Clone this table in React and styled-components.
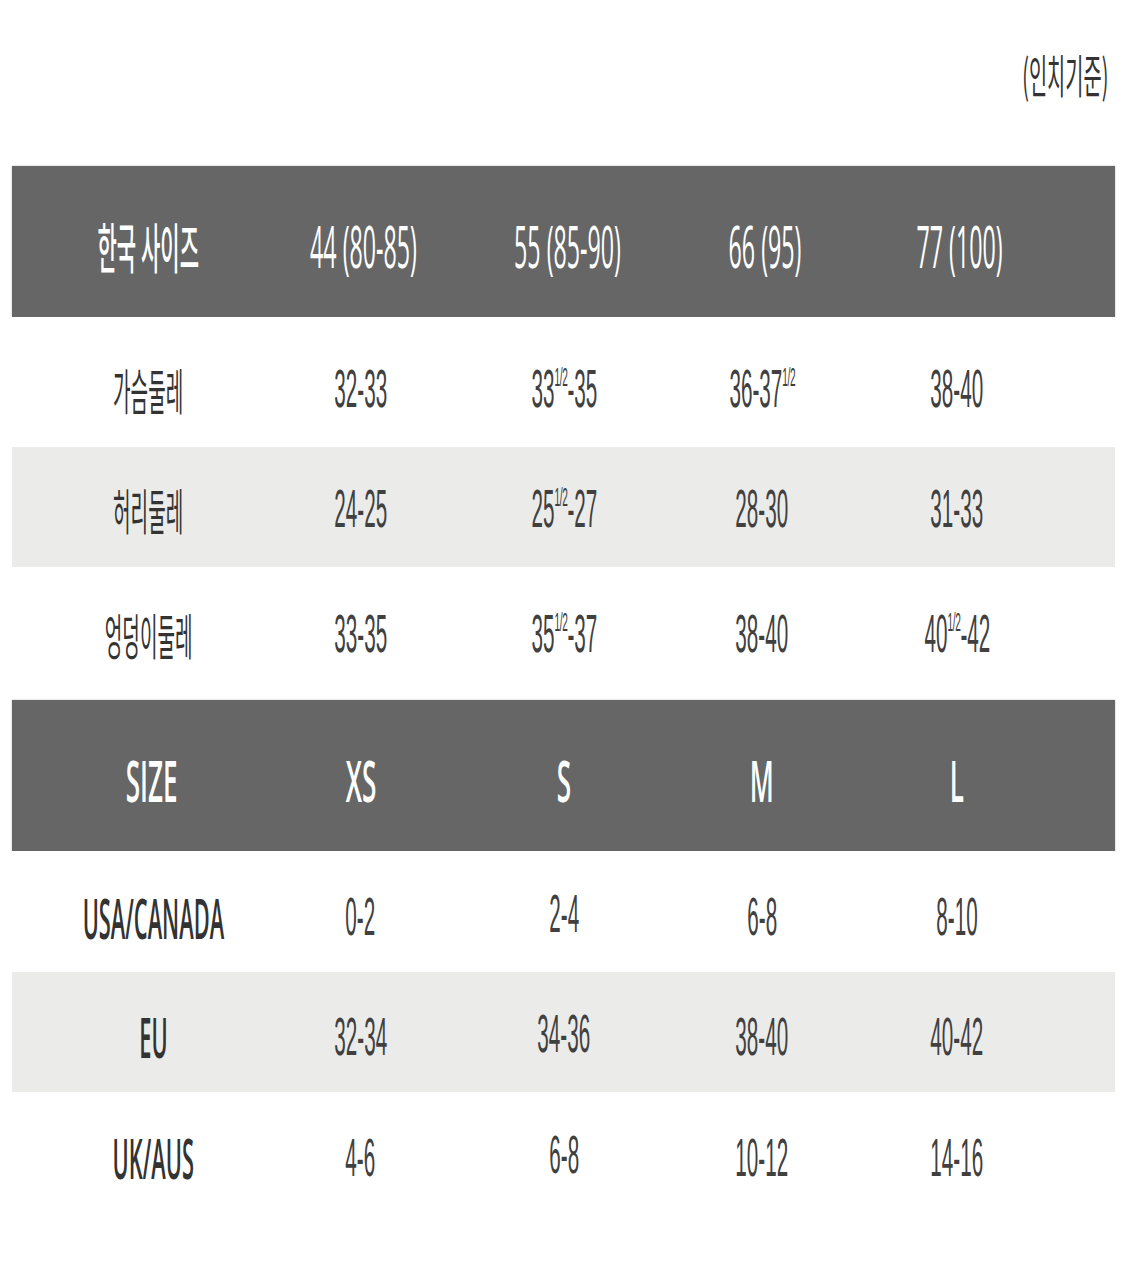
import React from "react";
import styled, { createGlobalStyle } from "styled-components";

const Global = createGlobalStyle`
  html, body { margin: 0; padding: 0; background: #fff; }
  body { width: 1125px; font-family: "Liberation Sans", "Noto Sans CJK KR", sans-serif; }
`;

const Page = styled.div`
  width: 1125px;
  min-height: 1284px;
  background: #fff;
  display: flex;
  flex-direction: column;
`;

const NoteBar = styled.div`
  height: 166px;
  display: flex;
  justify-content: flex-end;
  align-items: flex-start;
  padding: 50px 17px 0 0;
  box-sizing: border-box;
`;

const Squeeze = styled.span`
  display: inline-block;
  white-space: nowrap;
  transform: scaleX(${(p) => p.$scale || 0.39});
  transform-origin: ${(p) => p.$origin || "center"} center;
  line-height: 1;
`;

const Note = styled(Squeeze)`
  font-family: "Noto Sans CJK KR", sans-serif;
  font-size: 46px;
  color: #333;
`;

const Table = styled.div`
  margin-left: 12px;
  width: 1103px;
  display: flex;
  flex-direction: column;
`;

const Row = styled.div`
  display: grid;
  grid-template-columns: 213px 207px 200px 196px 194px;
  padding: 0 61px 0 32px;
  height: ${(p) => p.$h}px;
  background: ${(p) =>
    p.$head ? "#666666" : p.$shade ? "#ebecea" : "#ffffff"};
  box-shadow: ${(p) => (p.$head ? "0 0 2px rgba(0,0,0,0.25)" : "none")};
  position: relative;
`;

const Cell = styled.div`
  min-width: 0;
  display: flex;
  align-items: center;
  justify-content: center;
  padding-top: ${(p) => p.$dy || 0}px;
  box-sizing: border-box;
  margin-left: ${(p) => p.$dx || 0}px;
`;

const HeadText = styled(Squeeze)`
  font-family: "Open Sans", "Noto Sans CJK KR", sans-serif;
  font-weight: ${(p) => p.$weight || 600};
  font-size: 58px;
  color: #ffffff;
`;

const KoHead = styled(Squeeze)`
  font-family: "Noto Sans CJK KR", sans-serif;
  font-weight: 500;
  font-size: 54px;
  color: #ffffff;
`;

const KoLabel = styled(Squeeze)`
  font-family: "Noto Sans CJK KR", sans-serif;
  font-size: 49px;
  color: #333;
`;

const EnLabel = styled(Squeeze)`
  font-family: "Open Sans", sans-serif;
  font-weight: 600;
  font-size: 56px;
  color: #333;
`;

const Value = styled(Squeeze)`
  font-family: "Liberation Sans", sans-serif;
  font-size: 53px;
  color: #404040;
`;

const Sup = styled.span`
  font-size: 26px;
  vertical-align: 21px;
  line-height: 0;
  letter-spacing: -1px;
`;

function Val({ v }) {
  const parts = v.split("½");
  if (parts.length === 1) return <Value>{v}</Value>;
  return (
    <Value>
      {parts[0]}
      <Sup>1/2</Sup>
      {parts[1]}
    </Value>
  );
}

const korean = {
  head: ["44 (80-85)", "55 (85-90)", "66 (95)", "77 (100)"],
  rows: [
    { label: "가슴둘레", vals: ["32-33", "33½-35", "36-37½", "38-40"], h: 130, dy: 12 },
    { label: "허리둘레", vals: ["24-25", "25½-27", "28-30", "31-33"], h: 120, shade: true, dy: 2 },
    { label: "엉덩이둘레", vals: ["33-35", "35½-37", "38-40", "40½-42"], h: 133, dy: -8 },
  ],
};

const intl = {
  head: ["XS", "S", "M", "L"],
  rows: [
    { label: "USA/CANADA", vals: ["0-2", "2-4", "6-8", "8-10"], h: 121, dy: 10 },
    { label: "EU", vals: ["32-34", "34-36", "38-40", "40-42"], h: 120, shade: true, dy: 8 },
    { label: "UK/AUS", vals: ["4-6", "6-8", "10-12", "14-16"], h: 120, dy: 10 },
  ],
};

export default function App() {
  return (
    <Page>
      <Global />
      <NoteBar>
        <Note $origin="right" $scale={0.43}>(인치기준)</Note>
      </NoteBar>
      <Table>
        <Row $head $h={151}>
          <Cell $dy={8} $dx={-4}>
            <KoHead>한국 사이즈</KoHead>
          </Cell>
          {korean.head.map((h) => (
            <Cell key={h} $dy={8} $dx={6}>
              <HeadText $scale={0.4} $weight={500}>{h}</HeadText>
            </Cell>
          ))}
        </Row>
        {korean.rows.map((r) => (
          <Row key={r.label} $h={r.h} $shade={r.shade}>
            <Cell $dy={r.dy} $dx={-4}>
              <KoLabel>{r.label}</KoLabel>
            </Cell>
            {r.vals.map((v, i) => (
              <Cell key={i} $dy={r.dy}>
                <Val v={v} />
              </Cell>
            ))}
          </Row>
        ))}
        <Row $head $h={151}>
          <Cell $dy={8} $dx={2}>
            <HeadText $scale={0.45}>SIZE</HeadText>
          </Cell>
          {intl.head.map((h) => (
            <Cell key={h} $dy={8}>
              <HeadText $scale={0.45}>{h}</HeadText>
            </Cell>
          ))}
        </Row>
        {intl.rows.map((r) => (
          <Row key={r.label} $h={r.h} $shade={r.shade}>
            <Cell $dy={r.dy} $dx={6}>
              <EnLabel>{r.label}</EnLabel>
            </Cell>
            {r.vals.map((v, i) => (
              <Cell key={i} $dy={r.dy - (i === 1 ? 6 : 0)}>
                <Val v={v} />
              </Cell>
            ))}
          </Row>
        ))}
      </Table>
    </Page>
  );
}
